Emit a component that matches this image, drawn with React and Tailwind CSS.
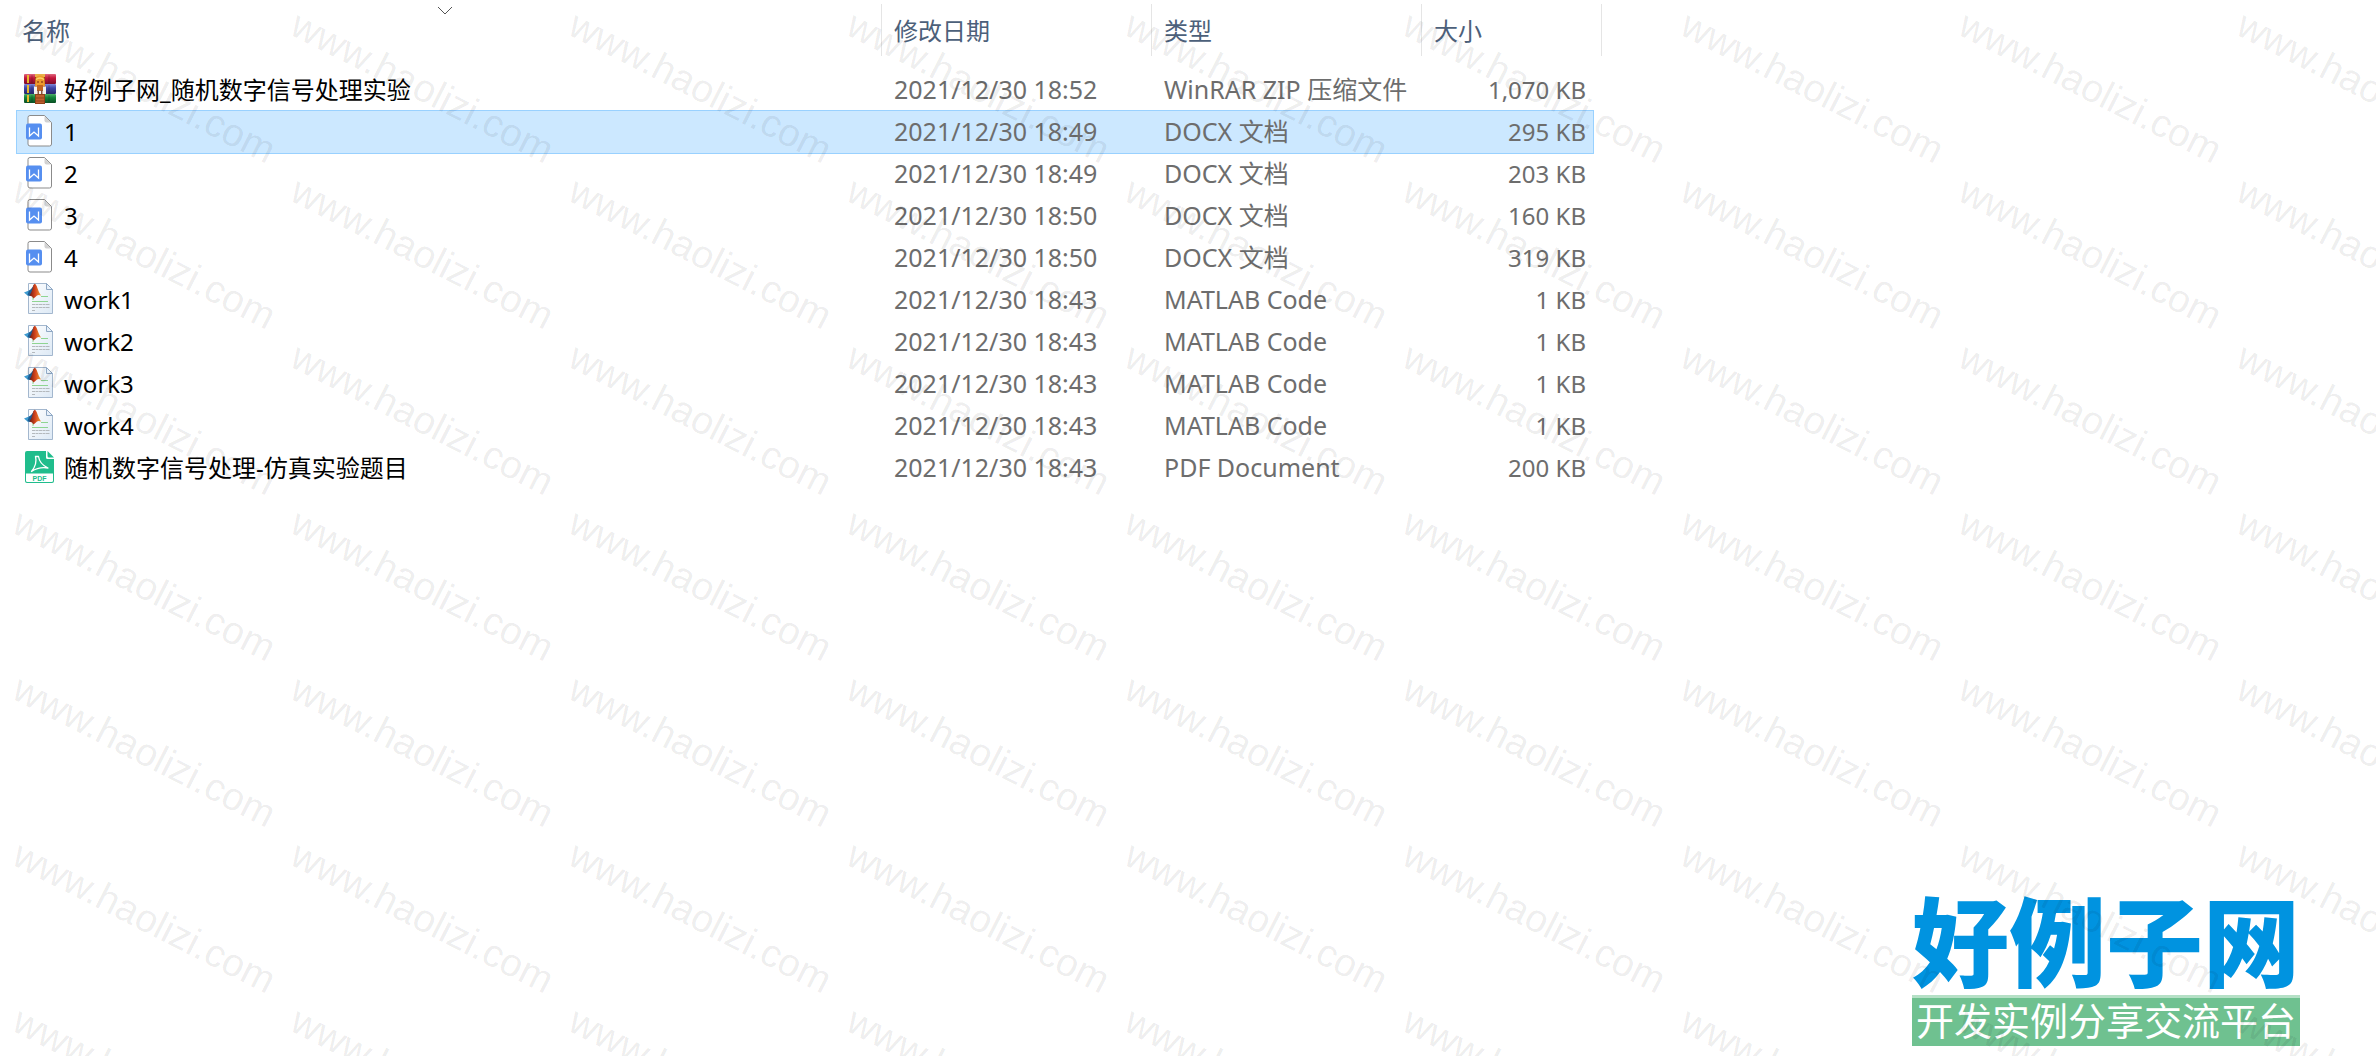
import React from "react";

const files = [
  { icon: "zip", name: "好例子网_随机数字信号处理实验", date: "2021/12/30 18:52", type: "WinRAR ZIP 压缩文件", size: "1,070 KB" },
  { icon: "docx", name: "1", date: "2021/12/30 18:49", type: "DOCX 文档", size: "295 KB", selected: true },
  { icon: "docx", name: "2", date: "2021/12/30 18:49", type: "DOCX 文档", size: "203 KB" },
  { icon: "docx", name: "3", date: "2021/12/30 18:50", type: "DOCX 文档", size: "160 KB" },
  { icon: "docx", name: "4", date: "2021/12/30 18:50", type: "DOCX 文档", size: "319 KB" },
  { icon: "matlab", name: "work1", date: "2021/12/30 18:43", type: "MATLAB Code", size: "1 KB" },
  { icon: "matlab", name: "work2", date: "2021/12/30 18:43", type: "MATLAB Code", size: "1 KB" },
  { icon: "matlab", name: "work3", date: "2021/12/30 18:43", type: "MATLAB Code", size: "1 KB" },
  { icon: "matlab", name: "work4", date: "2021/12/30 18:43", type: "MATLAB Code", size: "1 KB" },
  { icon: "pdf", name: "随机数字信号处理-仿真实验题目", date: "2021/12/30 18:43", type: "PDF Document", size: "200 KB" },
];

function ZipIcon() {
  return (
    <svg viewBox="0 0 32 32" className="mb-0.5 size-8 shrink-0" aria-hidden="true">
      <defs>
        <linearGradient id="bookRed" x2="0" y2="1"><stop offset="0" stopColor="#e0697f" /><stop offset=".4" stopColor="#c4173c" /><stop offset="1" stopColor="#7d0d2b" /></linearGradient>
        <linearGradient id="bookBlue" x2="0" y2="1"><stop offset="0" stopColor="#7f88d8" /><stop offset=".4" stopColor="#3f47a8" /><stop offset="1" stopColor="#27286b" /></linearGradient>
        <linearGradient id="bookGreen" x2="0" y2="1"><stop offset="0" stopColor="#4fae68" /><stop offset=".4" stopColor="#14843a" /><stop offset="1" stopColor="#0a4f25" /></linearGradient>
      </defs>
      <rect x="0" y="1" width="32" height="10" rx="1" fill="url(#bookRed)" />
      <rect x="0" y="11" width="32" height="10" rx="1" fill="url(#bookBlue)" />
      <rect x="0" y="21" width="32" height="9" rx="1" fill="url(#bookGreen)" />
      <path d="M4 2v8M4 12v8M4 22v7" stroke="#e8b92e" strokeWidth="2" />
      <path d="M8 2v8M8 12v8M8 22v7M25 2v8M25 12v8M25 22v7" stroke="#000" strokeOpacity=".2" />
      <path d="M11 1h10v30H11z" fill="#8f4219" />
      <path d="M12 22h8v8h-8z" fill="#bd5f2d" />
      <path d="M12 25h8M12 28h8" stroke="#8f4219" />
      <path d="M11 1h10v3H11z" fill="#e9b24a" />
      <path d="M11.500 7q0-4.500 4.500-4.500T20.500 7l.5 6h-10z" fill="#ee9a2c" />
      <path d="M12 6.500q4-3 8 0" fill="none" stroke="#fbd56b" strokeWidth="1.500" />
      <path d="M13 9h2M17 9h2" stroke="#9c4a1e" strokeWidth="1.300" />
      <path d="M10 13.500h3V18h6v-4.500h3V21H10z" fill="#f6f1ec" />
      <path d="M13 12h6v6h-6z" fill="#c4641f" />
      <path d="M13.500 17h1.500v4h-1.500zM17 17h1.500v4H17z" fill="#8a5540" />
    </svg>
  );
}

function DocxIcon() {
  return (
    <svg viewBox="0 0 32 32" className="mb-0.5 size-8 shrink-0" aria-hidden="true">
      <path d="M6 .5h14.500l7 7v21.500q0 2-2 2H6q-2 0-2-2V2.500q0-2 2-2z" fill="#fff" stroke="#8b8b8b" />
      <path d="M20.500 1v4.500q0 2 2 2h4.500z" fill="#d2d2d2" />
      <rect x="2" y="8.500" width="16" height="16" rx="2" fill="#568ff0" />
      <path d="M5.500 12.500v8.500l4.500-4 4.500 4v-8.500" fill="none" stroke="#fff" strokeWidth="1.300" />
    </svg>
  );
}

function MatlabIcon() {
  return (
    <svg viewBox="0 0 32 32" className="mb-0.5 size-8 shrink-0" aria-hidden="true">
      <defs>
        <linearGradient id="mPage" x2="1" y2="1"><stop offset="0" stopColor="#fff" /><stop offset="1" stopColor="#dde9f5" /></linearGradient>
        <linearGradient id="mPeak" x2="1" y2="0"><stop offset="0" stopColor="#6b1a14" /><stop offset=".5" stopColor="#d4441c" /><stop offset="1" stopColor="#f0a13a" /></linearGradient>
      </defs>
      <path d="M4.500 .5h18l6 6v24h-24z" fill="url(#mPage)" stroke="#a3b7ce" />
      <path d="M22.500 .5v6h6z" fill="#e7f0fa" stroke="#8fa8c4" />
      <path d="M17 13.500h7M8 16h2M8 18.500h16M8 14h1" stroke="#8fd592" />
      <path d="M8 21.500h18M8 24.500h18M8 27.500h3" stroke="#b4b9bd" strokeDasharray="3 .5" />
      <path d="M0 9.500 5 7.500l3 1-2 4-2 .5z" fill="#3f9bd0" />
      <path d="M5 7.500q2.500-1 5-6l1 4-3 6-2 1.500L3.500 12z" fill="#1e5d93" />
      <path d="M10.500 .800q1.600 0 3 4.500 1.200 4 3.500 7.200-2.500-1.200-4 0-1.500 1.500-3.500 3-1-2.500-4-3 2.200-3 3-7 .5-3.500 2-4.700z" fill="url(#mPeak)" />
    </svg>
  );
}

function PdfIcon() {
  return (
    <svg viewBox="0 0 32 32" className="mb-0.5 size-8 shrink-0" aria-hidden="true">
      <path d="M3 0h19v6.500Q22 8 23.500 8H30v22q0 2-2 2H3q-2 0-2-2V2q0-2 2-2z" fill="#20bd8c" />
      <path d="M23.500 0l6.500 6.500h-5Q23.500 6.500 23.500 5z" fill="#20bd8c" />
      <path d="M2 22.500h27v7q0 1.500-1.500 1.500h-24Q2 31 2 29.500z" fill="#fff" />
      <path d="M11.500 5.500h3Q15.500 13 24 17q-9-1.500-16.500 3.500Q13.500 13 11.500 5.500z" fill="none" stroke="#fff" strokeWidth="1.300" strokeLinejoin="round" />
      <text x="15.500" y="29.500" textAnchor="middle" fontSize="7" fontWeight="700" fontFamily="Liberation Sans, sans-serif" fill="#20bd8c">PDF</text>
    </svg>
  );
}

const icons = { zip: ZipIcon, docx: DocxIcon, matlab: MatlabIcon, pdf: PdfIcon };

function HeaderCell({ label, sorted }) {
  return (
    <th scope="col" className="relative p-0 pt-1 align-top font-normal" aria-sort={sorted ? "ascending" : undefined}>
      <button type="button" className={sorted ? "flex h-[52px] w-full items-center pt-0.5 pl-[5px]" : "flex h-[52px] w-full items-center border-l border-[#e5e5e5] pt-0.5 pl-3"}>
        {label}
      </button>
      {sorted && (
        <svg viewBox="0 0 16 9" className="absolute top-1.5 left-1/2 h-[9px] w-4 -translate-x-3" fill="none" stroke="#555" aria-hidden="true">
          <path d="M1 1l7 7 7-7" />
        </svg>
      )}
    </th>
  );
}

function FileTable() {
  return (
    <table className="ml-[17px] w-[1576px] table-fixed border-collapse text-left text-2xl">
      <colgroup>
        <col />
        <col className="w-[270px]" />
        <col className="w-[270px]" />
        <col className="w-[172px]" />
      </colgroup>
      <thead>
        <tr className="h-[69px] text-[#4c607a]">
          <HeaderCell label="名称" sorted />
          <HeaderCell label="修改日期" />
          <HeaderCell label="类型" />
          <th scope="col" className="p-0 pt-1 align-top font-normal">
            <button type="button" className="-mr-2 flex h-[52px] w-[181px] items-center border-x border-[#e5e5e5] pt-0.5 pl-3">大小</button>
          </th>
        </tr>
      </thead>
      <tbody>
        {files.map((file) => {
          const Icon = icons[file.icon];
          return (
            <tr
              key={file.name}
              aria-selected={file.selected ? true : undefined}
              className={file.selected ? "h-[42px] bg-[#cce8ff] text-[#6d6d6d] outline outline-[#99d1ff]" : "h-[42px] text-[#6d6d6d]"}
            >
              <td className="p-0 pl-[7px]">
                <div className="flex items-center gap-2 whitespace-nowrap text-black">
                  <Icon />
                  <span className="leading-8">{file.name}</span>
                </div>
              </td>
              <td className="p-0 pb-0.5 pl-[13px] text-[25px] leading-8 whitespace-nowrap">{file.date}</td>
              <td className="p-0 pb-0.5 pl-[13px] text-[25px] leading-8 whitespace-nowrap">{file.type}</td>
              <td className="p-0 pr-[7px] text-right leading-8 whitespace-nowrap">{file.size}</td>
            </tr>
          );
        })}
      </tbody>
    </table>
  );
}

function SiteLogo() {
  return (
    <div className="absolute right-[76px] bottom-[10px] flex flex-col items-center whitespace-nowrap">
      <div className="text-[97px] leading-[108px] font-black text-[#0093e0]">好例子网</div>
      <div className="border-t-3 border-[#b5e0c6] bg-[#6fc190] px-1 pb-1 text-[38px] leading-11 text-white">开发实例分享交流平台</div>
    </div>
  );
}

function Watermark() {
  return (
    <div className="pointer-events-none absolute inset-0 overflow-hidden select-none" aria-hidden="true">
      <div className="grid auto-rows-[166px] grid-cols-[repeat(9,278px)] pt-1 pl-[25px] font-['Liberation_Sans',sans-serif] text-[39px] leading-10 text-black/8">
        {Array.from({ length: 63 }, (_, i) => (
          <span key={i} className="origin-top-left rotate-27">www.haolizi.com</span>
        ))}
      </div>
    </div>
  );
}

export default function App() {
  return (
    <main className="relative min-h-screen overflow-hidden bg-white font-['Noto_Sans','Noto_Sans_CJK_SC',sans-serif]" lang="zh-CN">
      <FileTable />
      <SiteLogo />
      <Watermark />
    </main>
  );
}
